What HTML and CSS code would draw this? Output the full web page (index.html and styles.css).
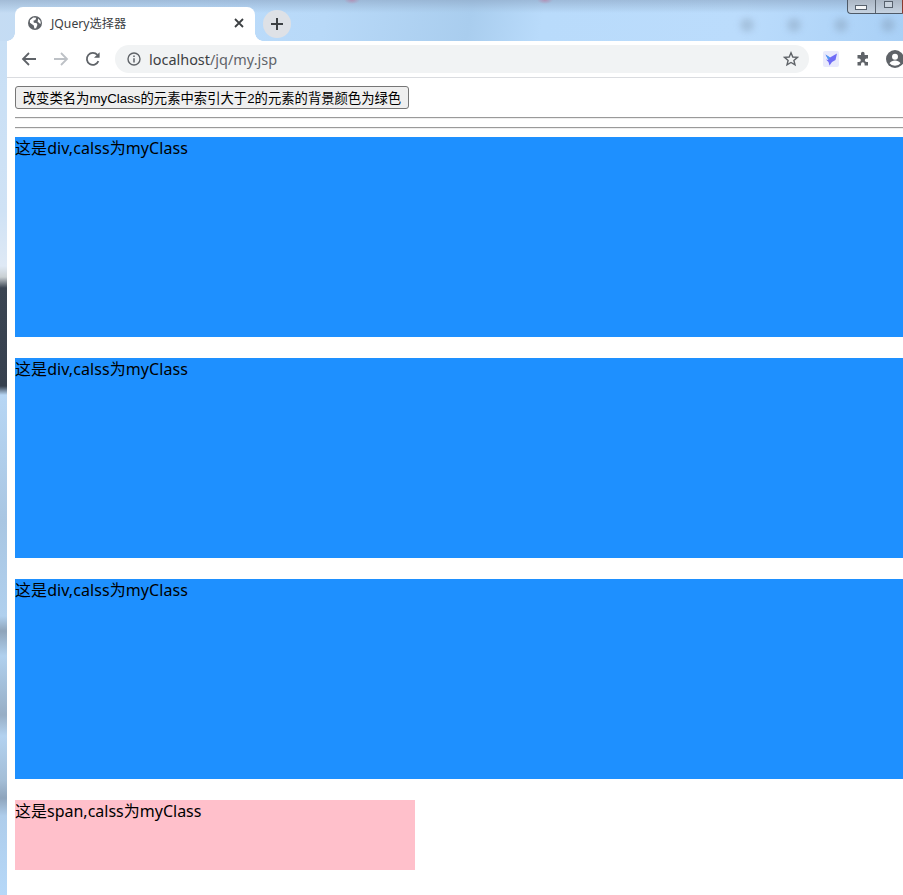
FILE: index.html
```html
<!DOCTYPE html>
<html lang="zh">
<head>
<meta charset="utf-8">
<title>JQuery选择器</title>
<link rel="stylesheet" href="styles.css">
</head>
<body>
<div class="tabbar">
  <div class="tab">
    <svg class="tab-globe" viewBox="0 0 16 16"><circle cx="8" cy="8" r="8" fill="#5f6368"/><path d="M2.200 4.800L6 1.600l3.400.5-.9 2.400-2.300 1 .5 2.100 3 .5 1.100 1.900-1.600 4-1.900.4-.7-3.500-4.400-3.200z" fill="#fff"/><path d="M11.500 2.800l2.600 2.600.6 3.500-1.900-.7-1.600-1.900z" fill="#fff"/></svg>
    <span class="tab-title">JQuery选择器</span>
    <svg class="tab-close" viewBox="0 0 10 10"><path d="M1 1l8 8M9 1l-8 8" stroke="#3c4043" stroke-width="1.800" fill="none"/></svg>
  </div>
  <div class="new-tab"><svg viewBox="0 0 14 14"><path d="M7 1v12M1 7h12" stroke="#3c4043" stroke-width="2" fill="none"/></svg></div>
  <div class="tray">
    <i class="blob"></i><i class="blob"></i><i class="blob"></i><i class="blob"></i>
  </div>
  <div class="win-controls"><span class="win-btn"><b class="win-min"></b></span><span class="win-btn"><b class="win-max"></b></span></div>
</div>
<div class="window">
  <div class="side"></div>
  <div class="main">
    <div class="toolbar">
      <svg class="nav" viewBox="0 0 16 16"><path d="M15 8H2M8 2L2 8l6 6" stroke="#5f6368" stroke-width="1.800" fill="none"/></svg>
      <svg class="nav" viewBox="0 0 16 16"><path d="M1 8h13M8 2l6 6-6 6" stroke="#bdc1c6" stroke-width="1.800" fill="none"/></svg>
      <svg class="nav" viewBox="0 0 16 16"><path d="M13.400 10.200A6 6 0 1 1 12.400 3.900" stroke="#5f6368" stroke-width="1.800" fill="none"/><path d="M14.600 1.200v5.600H9z" fill="#5f6368"/></svg>
      <div class="omnibox">
        <svg class="info" viewBox="0 0 14 14"><circle cx="7" cy="7" r="6" stroke="#5f6368" stroke-width="1.400" fill="none"/><path d="M7 6.200v4.200M7 3.400v1.600" stroke="#5f6368" stroke-width="1.500" fill="none"/></svg>
        <span class="url"><span class="host">localhost</span>/jq/my.jsp</span>
        <svg class="star" viewBox="0 0 16 16"><path d="M8 1.800l1.800 4.200 4.600.4-3.500 3 1.100 4.500-4-2.400-4 2.400 1.100-4.500-3.500-3 4.600-.4z" stroke="#5f6368" stroke-width="1.400" fill="none"/></svg>
      </div>
      <span class="ext"><svg viewBox="0 0 16 16"><path d="M2.500 3.500l4.500 3L14 2.500l-1.500 6.500-3.500 2-2.500 3.500-1-3.500L3 8.500l2.500.5z" fill="#6f6cf6"/><path d="M2.500 3.500l4.500 3-1.500 2.500z" fill="#4f9df2"/></svg></span>
      <svg class="puzzle" viewBox="0 0 16 16"><path d="M6 2.500a1.800 1.800 0 0 1 3.600 0V4H13v3.400h-1.400a1.800 1.800 0 0 0 0 3.600H13v3.500H9.600v-1.400a1.800 1.800 0 0 0-3.600 0v1.400H2.500v-3.500H4a1.800 1.800 0 0 0 0-3.600H2.500V4H6z" fill="#5f6368"/></svg>
      <svg class="avatar" viewBox="0 0 18 18"><circle cx="9" cy="9" r="9" fill="#5f6368"/><circle cx="9" cy="6.800" r="3" fill="#fff"/><path d="M3.500 13.200c1.300-2 3.400-2.800 5.500-2.800s4.200.8 5.500 2.800a7 7 0 0 1-11 0z" fill="#fff"/></svg>
    </div>
    <div class="page">
      <button class="action" type="button">改变类名为myClass的元素中索引大于2的元素的背景颜色为绿色</button>
      <hr class="rule">
      <hr class="rule">
      <div class="myClass">这是div,calss为myClass</div>
      <div class="myClass">这是div,calss为myClass</div>
      <div class="myClass">这是div,calss为myClass</div>
      <span class="myClass-span">这是span,calss为myClass</span>
    </div>
  </div>
</div>
</body>
</html>
```
FILE: styles.css
```css
html, body {
  margin: 0;
  padding: 0;
  height: 895px;
  overflow: hidden;
  background: #fff;
  font-family: "Liberation Sans", "Noto Sans CJK SC", sans-serif;
  color: #000;
}
.tabbar {
  position: relative;
  height: 41px;
  box-sizing: border-box;
  padding: 7px 0 0 15px;
  display: flex;
  align-items: flex-start;
  background:
    radial-gradient(8px 4px at 352px 0, rgba(190,120,160,.6), transparent),
    radial-gradient(8px 4px at 545px 0, rgba(190,120,160,.6), transparent),
    linear-gradient(180deg, rgba(140,165,195,.6) 0, rgba(160,190,220,.35) 9px, rgba(185,220,252,0) 13px),
    linear-gradient(100deg, #c5dcf3 0, #bcdcfb 22%, #b8d9f8 36%, #a9cdee 52%, #b9dbfb 60%, #bbdcfc 82%, #a9d0f6 100%);
}
.tab {
  position: relative;
  width: 240px;
  height: 34px;
  box-sizing: border-box;
  background: #fff;
  border-radius: 8px 8px 0 0;
  display: flex;
  align-items: center;
  padding: 0 11px 2px 13px;
}
.tab::before, .tab::after {
  content: "";
  position: absolute;
  bottom: 0;
  width: 8px;
  height: 8px;
}
.tab::before {
  left: -8px;
  background: radial-gradient(circle at 0 0, transparent 7.500px, #fff 8px);
}
.tab::after {
  right: -8px;
  background: radial-gradient(circle at 100% 0, transparent 7.500px, #fff 8px);
}
.tab-globe { width: 14px; height: 14px; flex: none; }
.tab-title {
  margin-left: 9px;
  flex: 1;
  font-size: 12.2px;
  color: #3c4043;
  font-family: "Noto Sans", "Noto Sans CJK SC", sans-serif;
}
.tab-close { width: 10px; height: 10px; flex: none; }
.new-tab {
  width: 28px;
  height: 28px;
  margin: 3px 0 0 8px;
  border-radius: 50%;
  background: #dee1e6;
  display: flex;
  align-items: center;
  justify-content: center;
}
.new-tab svg { width: 14px; height: 14px; }
.tray {
  margin-left: auto;
  margin-top: 11px;
  display: flex;
  gap: 33px;
  padding-right: 8px;
}
.blob {
  width: 14px;
  height: 14px;
  border-radius: 50%;
  background: rgba(110,130,150,.28);
  filter: blur(3px);
}
.win-controls {
  position: absolute;
  top: -2px;
  right: 0;
  width: 56px;
  height: 16px;
  box-sizing: border-box;
  display: flex;
  border: 1px solid #4e5a68;
  border-right: 1px solid #8a3a30;
  border-radius: 0 0 0 4px;
  background: linear-gradient(180deg, #a9b4c2, #c6d3e1);
}
.win-btn {
  flex: 1;
  display: flex;
  align-items: center;
  justify-content: center;
  border-right: 1px solid #59636f;
}
.win-btn:last-child { border-right: 0; }
.win-min { width: 10px; height: 3px; background: #f4f6f8; border: 1px solid #56606c; margin-top: 3px; }
.win-max { width: 7px; height: 5px; background: #c9d3de; border: 1px solid #56606c; margin-top: -3px; }
.window {
  display: flex;
  height: 854px;
}
.side {
  width: 7px;
  flex: none;
  background: linear-gradient(180deg,
    #c8dff5 0, #cfe2f5 170px, #dfe9f5 225px, #c9cfd2 236px, #3a4452 247px, #36404e 345px,
    #b7d6f4 354px, #a9c6e2 480px, #b0d0ee 575px, #8fa4ba 590px, #b0d0ee 615px, #97aec5 674px,
    #b3d2f0 695px, #a3bdd6 740px, #8ea4bc 757px, #aecdeb 775px, #b6d8f8 854px);
}
.main {
  flex: 1;
  min-width: 0;
  display: flex;
  flex-direction: column;
  overflow: hidden;
}
.toolbar {
  height: 37px;
  flex: none;
  box-sizing: border-box;
  border-bottom: 1px solid #dadce0;
  background: #fff;
  display: flex;
  align-items: center;
  padding: 0 0 0 14px;
}
.nav { width: 16px; height: 16px; margin-right: 16px; flex: none; }
.nav:nth-of-type(3) { margin-right: 14px; }
.omnibox {
  width: 694px;
  height: 28px;
  flex: none;
  border-radius: 14px;
  background: #f1f3f4;
  display: flex;
  align-items: center;
  padding: 0 10px 0 12px;
  box-sizing: border-box;
}
.info { width: 14px; height: 14px; flex: none; }
.url {
  flex: 1;
  margin-left: 8px;
  font-size: 14.45px;
  color: #5f6368;
  font-family: "Noto Sans", sans-serif;
}
.host { color: #3c4043; }
.star { width: 16px; height: 16px; flex: none; }
.ext {
  width: 16px;
  height: 16px;
  margin-left: 14px;
  flex: none;
  background: #e9eafc;
  border-radius: 2px;
  display: flex;
}
.ext svg { width: 16px; height: 16px; }
.puzzle { width: 16px; height: 16px; margin-left: 16px; flex: none; }
.avatar { width: 18px; height: 18px; margin-left: 15px; flex: none; }
.page {
  padding: 8px 0 0 8px;
}
.action {
  display: block;
  width: 394px;
  height: 23px;
  box-sizing: border-box;
  padding: 0;
  border: 1px solid #767676;
  border-radius: 3px;
  background: #efefef;
  color: #000;
  font-size: 13.333px;
  font-family: "Liberation Sans", "Noto Sans CJK SC", sans-serif;
  white-space: nowrap;
}
.rule {
  height: 2px;
  box-sizing: border-box;
  margin: 8px 0 0;
  border: 0;
  border-top: 1px solid #9a9a9a;
  border-bottom: 1px solid #eee;
}
.myClass {
  height: 200px;
  margin-top: 21px;
  background: #1e90ff;
  font-family: "Noto Sans", "Noto Sans CJK SC", sans-serif;
  font-size: 16px;
  line-height: 23px;
  letter-spacing: .08px;
}
.rule + .myClass { margin-top: 8px; }
.myClass-span {
  display: block;
  width: 400px;
  height: 70px;
  margin-top: 21px;
  background: #ffc0cb;
  font-family: "Noto Sans", "Noto Sans CJK SC", sans-serif;
  font-size: 16px;
  line-height: 23px;
}
```
